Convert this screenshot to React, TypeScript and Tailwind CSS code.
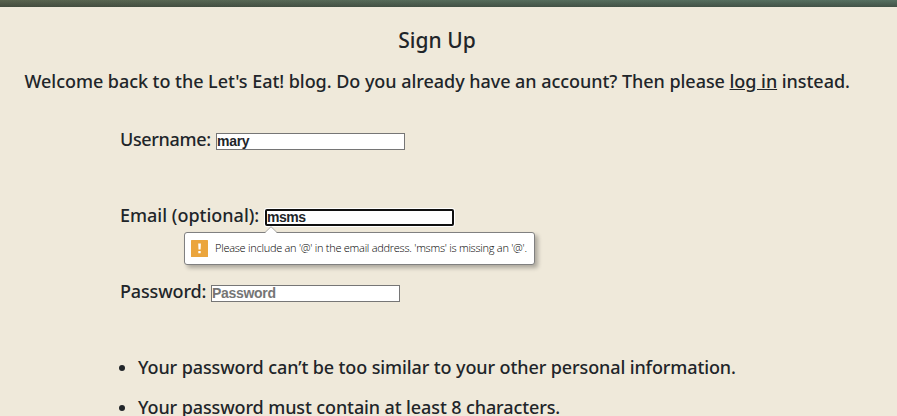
import React from "react";

function Field({ label, labelClass, children }: { label: string; labelClass: string; children: React.ReactNode }) {
  return (
    <div className="flex h-[76px] items-start">
      <label className={`shrink-0 whitespace-nowrap ${labelClass}`}>{label}</label>
      {children}
    </div>
  );
}

const inputClass =
  "h-[17px] w-[189px] border border-[#767676] bg-white px-0 pt-0 pb-px font-['Liberation_Sans',Arial,sans-serif] text-[14px] tracking-[-0.3px] leading-[14px] font-bold text-[#212529] outline-none placeholder:text-[#757575]";

function ValidationBubble() {
  return (
    <div className="absolute top-[23px] -left-[81px] flex h-[33px] w-[351px] items-center rounded-[3px] border border-[#808080] bg-white pl-[6px] shadow-[3px_3px_4px_rgba(0,0,0,0.28)]">
      <svg className="absolute -top-[7px] left-[79px]" width="14" height="8" viewBox="0 0 14 8">
        <path d="M1 7 L7 1 L13 7 V8 H1Z" fill="#fff" />
        <path d="M1 6.5 L7 .7 L13 6.5" fill="none" stroke="#aaa" />
      </svg>
      <svg className="-mt-px shrink-0" width="17" height="17" viewBox="0 0 17 17">
        <rect width="17" height="17" rx="0.5" fill="#eba53c" />
        <path d="M7.2 3.4h2.7l-.3 6H7.5z M7.3 11h2.4v2.2H7.3z" fill="#fff" />
      </svg>
      <span className="-mt-[2px] ml-[7px] font-['Open_Sans','Noto_Sans',sans-serif] text-[11px] font-[360] tracking-[-0.26px] whitespace-nowrap text-[#000]">
        Please include an '@' in the email address. 'msms' is missing an '@'.
      </span>
    </div>
  );
}

export default function App() {
  return (
    <div className="h-[416px] overflow-hidden bg-[#efe9da] font-['Noto_Sans','Open_Sans',sans-serif] text-[18px] leading-[28px] font-medium text-[#212529]">
      <div className="h-[7px] bg-linear-to-r from-[#59634e] via-[#566c5b] to-[#567061]">
        <div className="h-full bg-linear-to-b from-transparent to-[#30383088]" />
      </div>
      <h1 className="pt-[18px] pr-[23px] text-center text-[21px] leading-[30px]">Sign Up</h1>
      <p className="mt-[12px] pl-[24.5px] tracking-[-0.045px] whitespace-nowrap">
        Welcome back to the Let's Eat! blog. Do you already have an account? Then please{" "}
        <a href="#" className="underline">log in</a> instead.
      </p>
      <form className="mt-[30px] pl-[120px]" noValidate onSubmit={(e) => e.preventDefault()}>
        <Field label="Username:" labelClass="w-[96px] tracking-[-0.35px]">
          <input className={`mt-[8px] ${inputClass}`} defaultValue="mary" />
        </Field>
        <Field label="Email (optional):" labelClass="w-[145px]">
          <div className="relative mt-[8px] h-[17px] w-[189px]">
            <input
              className="block h-[17px] w-[189px] rounded-[2px] border-2 border-[#101010] bg-white px-0 pt-0 pb-px font-['Liberation_Sans',Arial,sans-serif] text-[14px] leading-[12px] font-bold tracking-[-0.5px] text-[#212529] shadow-[0_0_0_1px_#fff] outline-none"
              defaultValue="msms"
            />
            <ValidationBubble />
          </div>
        </Field>
        <Field label="Password:" labelClass="w-[91px] tracking-[-0.15px]">
          <input type="password" placeholder="Password" className={`mt-[8px] ${inputClass}`} />
        </Field>
        <ul className="list-disc pl-[18px] tracking-[-0.11px]">
          <li className="mb-[12px]">Your password can’t be too similar to your other personal information.</li>
          <li>Your password must contain at least 8 characters.</li>
        </ul>
      </form>
    </div>
  );
}
